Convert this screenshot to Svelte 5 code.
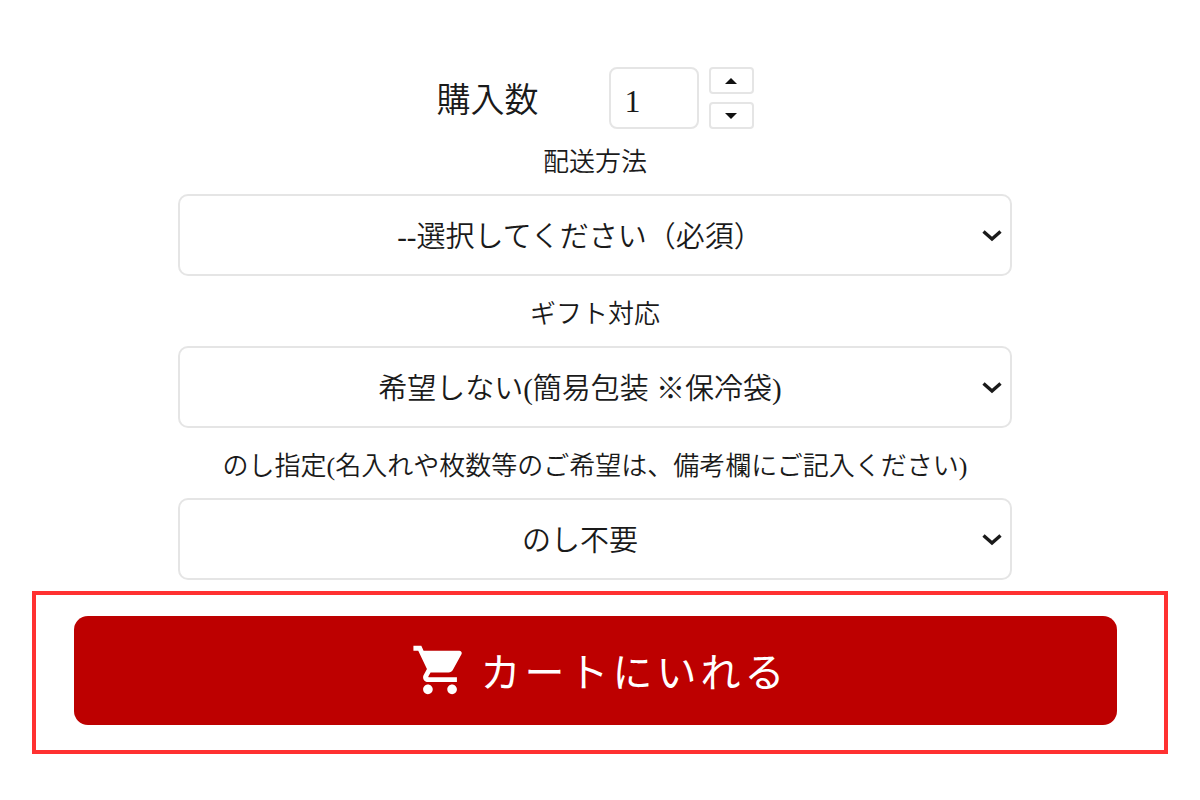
<script>
let quantity = 1;

let fields = [
  {
    id: 'delivery',
    label: '配送方法',
    value: '--選択してください（必須）',
    options: ['--選択してください（必須）']
  },
  {
    id: 'gift',
    label: 'ギフト対応',
    value: '希望しない(簡易包装 ※保冷袋)',
    options: ['希望しない(簡易包装 ※保冷袋)']
  },
  {
    id: 'noshi',
    label: 'のし指定(名入れや枚数等のご希望は、備考欄にご記入ください)',
    value: 'のし不要',
    options: ['のし不要']
  }
];

function step(amount) {
  quantity = Math.max(1, (Number(quantity) || 1) + amount);
}
</script>
<style>
:global(body) {
  margin: 0;
  background: #fff;
}

form {
  padding: 67px 32px 46px;
  color: #1a1a1a;
  font-family: "Liberation Serif", "Noto Sans CJK JP", serif;
  font-weight: 350;
}

input,
select,
button {
  box-sizing: border-box;
  margin: 0;
  border: 2px solid #e5e5e5;
  background: #fff;
  color: inherit;
  font-family: inherit;
  font-weight: inherit;
}

.fields {
  max-width: 834px;
  margin: 0 auto;
  padding-right: 10px;
}

.quantity {
  display: flex;
  justify-content: center;
  align-items: center;
  gap: 10px;
  margin-bottom: 15px;
}

.quantity label {
  margin-right: 60px;
  padding-top: 6px;
  font-size: 34px;
  line-height: 40px;
}

.quantity input {
  width: 90px;
  height: 62px;
  padding: 6px 14px 0;
  border-radius: 8px;
  font-size: 32px;
}

.steps {
  display: flex;
  flex-direction: column;
  gap: 8px;
}

.steps button {
  display: flex;
  align-items: center;
  justify-content: center;
  width: 45px;
  height: 27px;
  padding: 0;
  border-radius: 4px;
}

.steps svg {
  width: 12px;
  height: 6px;
}

.field {
  margin-bottom: 20px;
  text-align: center;
}

.field:last-child {
  margin-bottom: 11px;
}

.field label {
  display: block;
  margin-bottom: 12px;
  font-size: 26px;
  line-height: 38px;
}

.select {
  position: relative;
}

.select select {
  display: block;
  width: 100%;
  height: 82px;
  padding: 4px 44px 0 14px;
  border-radius: 10px;
  appearance: none;
  font-size: 29px;
  text-align: center;
  text-align-last: center;
}

.select svg {
  position: absolute;
  top: 50%;
  right: 10px;
  width: 20px;
  height: 12px;
  margin-top: -5px;
  pointer-events: none;
}

.submit {
  padding: 21px 47px 25px 38px;
  border: 4px solid #ff3131;
}

.submit button {
  display: flex;
  align-items: center;
  justify-content: center;
  gap: 12px;
  width: 100%;
  height: 109px;
  padding: 0 0 2px 8px;
  border: 0;
  border-radius: 14px;
  background: #bd0000;
  color: #fff;
  font-size: 40px;
  font-weight: 400;
  letter-spacing: 4px;
}

.submit svg {
  width: 58px;
  height: 58px;
}
</style>

<form on:submit|preventDefault>
  <div class="fields">
    <div class="quantity">
      <label for="quantity">購入数</label>
      <input id="quantity" type="text" inputmode="numeric" bind:value={quantity}>
      <div class="steps">
        <button type="button" aria-label="増やす" on:click={() => step(1)}>
          <svg viewBox="0 0 12 6"><path d="M0 6L6 0l6 6z" fill="#111"/></svg>
        </button>
        <button type="button" aria-label="減らす" on:click={() => step(-1)}>
          <svg viewBox="0 0 12 6"><path d="M0 0l6 6 6-6z" fill="#111"/></svg>
        </button>
      </div>
    </div>

    {#each fields as field}
    <div class="field">
      <label for={field.id}>{field.label}</label>
      <div class="select">
        <select id={field.id} bind:value={field.value}>
          {#each field.options as option}
          <option value={option}>{option}</option>
          {/each}
        </select>
        <svg viewBox="0 0 20 12"><path d="M1.500 1.500L10 9l8.500-7.500" fill="none" stroke="#1a1a1a" stroke-width="3.400"/></svg>
      </div>
    </div>
    {/each}
  </div>

  <div class="submit">
    <button type="submit">
      <svg viewBox="0 0 24 24" fill="currentColor">
        <path d="M7 18c-1.100 0-1.990.9-1.990 2S5.900 22 7 22s2-.9 2-2-.9-2-2-2zM1 2v2h2l3.600 7.590-1.350 2.450c-.16.280-.25.610-.25.960 0 1.100.9 2 2 2h12v-2H7.420c-.14 0-.25-.11-.25-.25l.03-.12.9-1.630h7.450c.75 0 1.410-.41 1.750-1.030l3.580-6.490c.08-.14.12-.31.120-.48 0-.55-.45-1-1-1H5.210l-.94-2H1zm16 16c-1.100 0-1.990.9-1.990 2s.89 2 1.990 2 2-.9 2-2-.9-2-2-2z"/>
      </svg>
      <span>カートにいれる</span>
    </button>
  </div>
</form>
